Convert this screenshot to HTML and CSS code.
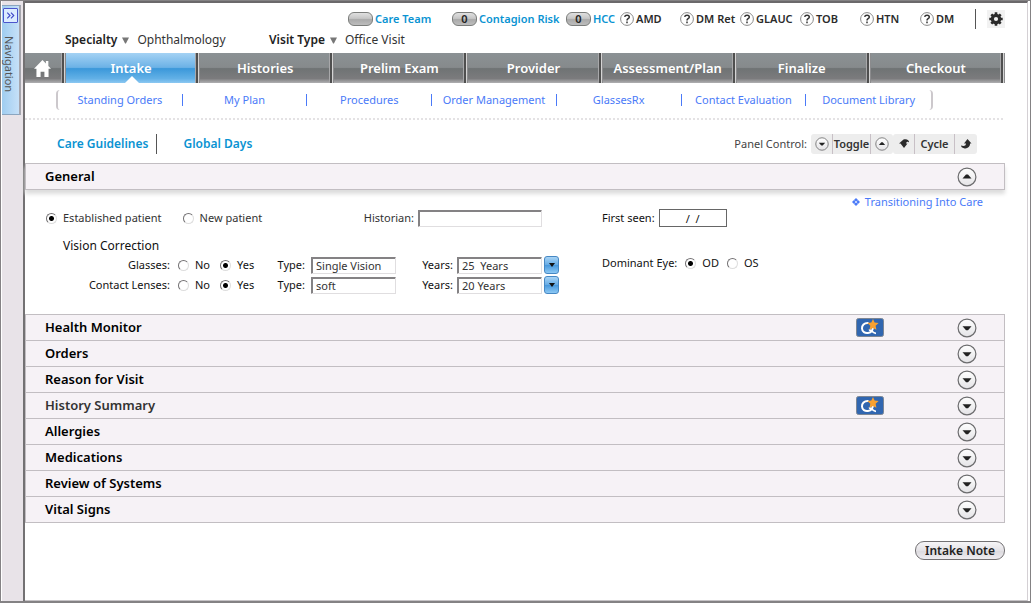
FILE: index.html
```html
<!DOCTYPE html>
<html lang="en">
<head>
<meta charset="utf-8">
<meta name="viewport" content="width=device-width, initial-scale=1">
<title>Intake</title>
<link rel="stylesheet" href="styles.css">
</head>
<body>
<svg class="defs" aria-hidden="true">
  <defs>
    <linearGradient id="disc" x1="0" y1="0" x2="0" y2="1">
      <stop offset="0" stop-color="#fff"/><stop offset="1" stop-color="#e4e3e6"/>
    </linearGradient>
    <symbol id="down" viewBox="0 0 20 20">
      <circle cx="10" cy="10" r="8.9" fill="url(#disc)" stroke="#6c6c6e" stroke-width="1.2"/>
      <path d="M5.500 8.200h9L11 12.200H9z" fill="#222"/>
    </symbol>
    <symbol id="up" viewBox="0 0 20 20">
      <circle cx="10" cy="10" r="8.900" fill="url(#disc)" stroke="#6c6c6e" stroke-width="1.200"/>
      <path d="M5.500 11.600h9L11 7.600H9z" fill="#222"/>
    </symbol>
    <symbol id="help" viewBox="0 0 14 14">
      <circle cx="7" cy="7" r="6.400" fill="#fff" stroke="#8a8a8a"/>
      <path d="M4.700 4.900C5 2.600 9.300 2.700 9.300 5 9.300 6.700 7 6.600 7 8.400M7 9.600v1.700" fill="none" stroke="#333" stroke-width="1.500"/>
    </symbol>
    <symbol id="quality" viewBox="0 0 28 19">
      <rect x=".5" y=".5" width="27" height="18" rx="2" fill="#3066b0" stroke="#7c8694"/>
      <path d="M12.500 5C8 4.600 5.800 7.500 6 10.500c.2 3.400 3 4.800 6 4.400 3.500-.5 5.300-3.200 4.700-5.900" fill="none" stroke="#fff" stroke-width="2"/>
      <path d="M13 12.500c2-1.500 3.500 2.800 7 2.800" fill="none" stroke="#fff" stroke-width="1.800"/>
      <path d="M17 1l1.600 3.600 4 .5-3 2.700.8 4L17 9.900l-3.500 1.900.8-4-3-2.700 4-.5z" fill="#f8a130"/>
    </symbol>
  </defs>
</svg>
<div class="window">
  <aside class="rail">
    <div class="rail-tab">
      <button class="expand" type="button" aria-label="Expand navigation">
        <svg viewBox="0 0 14 14"><path d="M3.500 4L6.500 7l-3 3M7.500 4l3 3-3 3" fill="none" stroke="#3f48c8" stroke-width="1.200"/></svg>
      </button>
      <span class="rail-label">Navigation</span>
    </div>
  </aside>
  <main class="main">
    <div class="alerts">
      <a class="alert blue" href="#"><span class="pill"></span>Care Team</a>
      <a class="alert blue" href="#"><span class="pill">0</span>Contagion Risk</a>
      <a class="alert blue" href="#"><span class="pill">0</span>HCC</a>
      <a class="alert" href="#"><svg class="help"><use href="#help"/></svg>AMD</a>
      <a class="alert" href="#"><svg class="help"><use href="#help"/></svg>DM Ret</a>
      <a class="alert" href="#"><svg class="help"><use href="#help"/></svg>GLAUC</a>
      <a class="alert" href="#"><svg class="help"><use href="#help"/></svg>TOB</a>
      <a class="alert" href="#"><svg class="help"><use href="#help"/></svg>HTN</a>
      <a class="alert last" href="#"><svg class="help"><use href="#help"/></svg>DM</a>
      <button class="gear" type="button" aria-label="Settings">
        <svg viewBox="0 0 18 18"><circle cx="9" cy="9" r="3.600" fill="none" stroke="#2b2b2b" stroke-width="3.200"/><path d="M9 2.300v13.400M2.300 9h13.400M4.300 4.300l9.400 9.400M13.700 4.300l-9.400 9.400" stroke="#2b2b2b" stroke-width="2.600"/><circle cx="9" cy="9" r="2.100" fill="#f2f2f2"/></svg>
      </button>
    </div>
    <div class="visit">
      <div class="visit-item specialty">
        <button type="button">Specialty <svg viewBox="0 0 8 8"><path d="M0 1h8L4.500 8h-1z" fill="#777"/></svg></button><span>Ophthalmology</span>
      </div>
      <div class="visit-item">
        <button type="button">Visit Type <svg viewBox="0 0 8 8"><path d="M0 1h8L4.500 8h-1z" fill="#777"/></svg></button><span>Office Visit</span>
      </div>
    </div>
    <nav class="tabs">
      <a class="home" href="#" aria-label="Home"><svg viewBox="0 0 16 16"><path d="M8 0L0 8.200h2.300V16h3.900v-5h3.600v5h3.900V8.200H16l-2.500-2.600V1h-2.300v2.300z" fill="#fff"/></svg></a>
      <a class="tab active" href="#">Intake</a>
      <a class="tab" href="#">Histories</a>
      <a class="tab" href="#">Prelim Exam</a>
      <a class="tab" href="#">Provider</a>
      <a class="tab" href="#">Assessment/Plan</a>
      <a class="tab" href="#">Finalize</a>
      <a class="tab" href="#">Checkout</a>
    </nav>
    <nav class="subnav">
      <a href="#">Standing Orders</a>
      <a href="#">My Plan</a>
      <a href="#">Procedures</a>
      <a href="#">Order Management</a>
      <a href="#">GlassesRx</a>
      <a href="#">Contact Evaluation</a>
      <a href="#">Document Library</a>
    </nav>
    <div class="dots"></div>
    <div class="tools">
      <a class="tool-link" href="#">Care Guidelines</a>
      <a class="tool-link" href="#">Global Days</a>
      <span class="panel-label">Panel Control:</span>
      <div class="control">
        <button class="icon-cell" type="button" aria-label="Expand all"><svg><use href="#down"/></svg></button>
        <button class="toggle" type="button">Toggle</button>
        <button class="icon-cell" type="button" aria-label="Collapse all"><svg><use href="#up"/></svg></button>
      </div>
      <div class="control">
        <button class="icon-cell" type="button" aria-label="Previous panel"><svg viewBox="0 0 14 14"><path d="M2 6.500L6.500 2.500c3-1 6 .5 5.500 3C11 4.500 9.500 4.500 9 6.500h1.500L7 11 3.500 6.500z" fill="#2b2b2b"/></svg></button>
        <button class="cycle" type="button">Cycle</button>
        <button class="icon-cell" type="button" aria-label="Next panel"><svg viewBox="0 0 14 14"><path d="M8.500 2L12.500 6.500H11c.3 3.500-3 5.500-6 4.700C3 11 2 9.500 2 8.500c2.500 1 5 .5 5-2H5z" fill="#2b2b2b"/></svg></button>
      </div>
    </div>

    <section class="general">
      <header class="bar open"><h2>General</h2><button class="arrow" type="button" aria-label="Collapse General"><svg><use href="#up"/></svg></button></header>
      <form class="form">
        <a class="transition" href="#"><svg viewBox="0 0 8 8"><path d="M4 0l2 2-2 1.500L2 2zM4 4.500L6 6 4 8 2 6zM2 2l1.500 2L2 6 0 4zM6 2l2 2-2 2-1.500-2z" fill="#4a7af8"/></svg>Transitioning Into Care</a>
        <div class="patient soft">
          <label class="radio"><input type="radio" name="patient" checked>Established patient</label>
          <label class="radio"><input type="radio" name="patient">New patient</label>
        </div>
        <div class="historian soft"><label for="historian">Historian:</label><input class="field" id="historian" type="text"></div>
        <div class="seen"><label for="seen">First seen:</label><input class="date" id="seen" type="text" value="/  /"></div>
        <h3>Vision Correction</h3>
        <span class="right">Glasses:</span>
        <div class="choice"><label class="radio"><input type="radio" name="glasses">No</label><label class="radio"><input type="radio" name="glasses" checked>Yes</label></div>
        <label class="right" for="gtype">Type:</label>
        <div class="type"><input class="field" id="gtype" type="text" value="Single Vision"></div>
        <label class="right" for="gyears">Years:</label>
        <div class="years"><input class="field" id="gyears" type="text" value="25  Years"><button class="drop" type="button" aria-label="Choose years"><svg viewBox="0 0 6 4"><path d="M0 0h6L3 4z" fill="#111"/></svg></button></div>
        <div class="eye"><span>Dominant Eye:</span><label class="radio"><input type="radio" name="eye" checked>OD</label><label class="radio"><input type="radio" name="eye">OS</label></div>
        <span class="right">Contact Lenses:</span>
        <div class="choice"><label class="radio"><input type="radio" name="contacts">No</label><label class="radio"><input type="radio" name="contacts" checked>Yes</label></div>
        <label class="right" for="ctype">Type:</label>
        <div class="type"><input class="field" id="ctype" type="text" value="soft"></div>
        <label class="right" for="cyears">Years:</label>
        <div class="years"><input class="field" id="cyears" type="text" value="20 Years"><button class="drop" type="button" aria-label="Choose years"><svg viewBox="0 0 6 4"><path d="M0 0h6L3 4z" fill="#111"/></svg></button></div>
      </form>
    </section>
    <section class="panels">
      <header class="bar"><h2>Health Monitor</h2><svg class="quality"><use href="#quality"/></svg><button class="arrow" type="button" aria-label="Expand Health Monitor"><svg><use href="#down"/></svg></button></header>
      <header class="bar"><h2>Orders</h2><button class="arrow" type="button" aria-label="Expand Orders"><svg><use href="#down"/></svg></button></header>
      <header class="bar"><h2>Reason for Visit</h2><button class="arrow" type="button" aria-label="Expand Reason for Visit"><svg><use href="#down"/></svg></button></header>
      <header class="bar muted"><h2>History Summary</h2><svg class="quality"><use href="#quality"/></svg><button class="arrow" type="button" aria-label="Expand History Summary"><svg><use href="#down"/></svg></button></header>
      <header class="bar"><h2>Allergies</h2><button class="arrow" type="button" aria-label="Expand Allergies"><svg><use href="#down"/></svg></button></header>
      <header class="bar"><h2>Medications</h2><button class="arrow" type="button" aria-label="Expand Medications"><svg><use href="#down"/></svg></button></header>
      <header class="bar"><h2>Review of Systems</h2><button class="arrow" type="button" aria-label="Expand Review of Systems"><svg><use href="#down"/></svg></button></header>
      <header class="bar"><h2>Vital Signs</h2><button class="arrow" type="button" aria-label="Expand Vital Signs"><svg><use href="#down"/></svg></button></header>
    </section>
    <button class="note" type="button">Intake Note</button>
  </main>
</div>
</body>
</html>
```
FILE: styles.css
```css
* { box-sizing: border-box; }
body { margin: 0; font: 11px/16px "Noto Sans", "Open Sans", sans-serif; color: #000; background: #fff; }
button, input { font: inherit; color: inherit; margin: 0; padding: 0; }
button { border: 0; background: none; cursor: pointer; }
a { color: inherit; text-decoration: none; }
h2, h3 { margin: 0; }
svg { display: block; flex: none; }
.defs { position: absolute; width: 0; height: 0; }

.window { display: flex; min-height: 100vh; border: 1px solid #848284; border-width: 1px 1px 2px; }
.rail { width: 24px; flex: none; background: #e8e3e8; border-left: 1px solid #fff; border-right: 2px solid #737173; padding-top: 4px; }
.rail-tab { width: 19px; height: 110px; display: flex; flex-direction: column; align-items: center; border: 1px solid #8ba6c0; border-left: 0; border-right: 2px solid #a5a5ad; background: linear-gradient(90deg, #9fcdf0, #c6e0f8); }
.expand { width: 15px; height: 15px; margin-top: 2px; border: 1px solid #4b55cc; border-radius: 1px; background: #dcecff; }
.expand svg { width: 13px; height: 13px; }
.rail-label { writing-mode: vertical-rl; margin-top: 13px; padding-right: 4px; font-size: 11px; line-height: 12px; color: #555; }

.main { flex: 1; display: flex; flex-direction: column; padding-right: 22px; border-top: 2px solid #6b696b; border-right: 1px solid #d4d0d4; margin-right: 2px; border-bottom: 1px solid #c6c3c6; }
.alerts { display: flex; justify-content: flex-end; align-items: center; margin-top: 6px; height: 20px; font-weight: 600; color: #2b2b2b; }
.alert { display: flex; align-items: center; gap: 2px; width: 60px; white-space: nowrap; }
.alert.blue { color: #0a93d2; }
.alert:nth-child(1) { width: 104px; }
.alert:nth-child(2) { width: 114px; }
.alert:nth-child(3) { width: 54px; }
.alert.last { width: 56px; height: 20px; border-right: 1px solid #555; }
.pill { width: 25px; height: 14px; border: 1px solid #7b7d7b; border-radius: 6px; background: linear-gradient(#e0e0e0 0, #c6c6c6 45%, #aaa 55%, #bdbdbd); color: #222; text-align: center; line-height: 12px; }
.help { width: 14px; height: 14px; }
.gear { width: 18px; height: 18px; margin-left: 11px; background: #f2f2f2; }
.visit { display: flex; align-items: center; height: 22px; margin-bottom: 2px; padding-left: 40px; font-size: 12px; color: #333; }
.visit-item { display: flex; align-items: center; gap: 8px; }
.specialty { width: 204px; }
.visit-item button { display: flex; align-items: center; gap: 5px; font-weight: 600; color: #222; }
.visit-item svg { width: 7px; height: 8px; }

.tabs { display: flex; height: 30px; background: linear-gradient(#8b9194 0, #868a8c 48%, #6f7374 52%, #7b7b7d 85%, #b0b0b2 100%); font-size: 13px; font-weight: 600; color: #fff; }
.home { width: 41px; display: flex; align-items: center; justify-content: center; padding-right: 5px; }
.home svg { width: 17px; height: 17px; }
.home, .tab { border-right: 1px solid #8b8b8d; box-shadow: inset -1px 0 #d4d4d4, inset -3px 0 #4f4f4f, inset -4px 0 #a8a8aa; }
.tab { flex: 1; display: flex; align-items: center; justify-content: center; padding-right: 3px; }
.active { background: linear-gradient(#a4d2f4 0, #6cb2e6 48%, #3b98da 52%, #62b0e6 85%, #8cc8f2 100%); position: relative; }
.active::after { content: ""; position: absolute; left: 50%; bottom: 0; margin-left: -8px; border: 7px solid transparent; border-top: 0; border-bottom-color: #fff; }

.subnav { display: grid; grid-template-columns: repeat(7, 1fr); margin: 7px 72px 0 31px; height: 20px; align-items: center; border: 2px solid #ccc8cc; border-width: 0 2px; border-radius: 4px; color: #4a7af8; text-align: center; }
.subnav a { line-height: 12px; border-right: 1px solid #4a7af8; white-space: nowrap; }
.subnav a:last-child { border: 0; }
.dots { height: 2px; margin-top: 8px; background: repeating-linear-gradient(90deg, #e4e2e4 0, #e4e2e4 2px, transparent 2px, transparent 4px); }

.tools { display: flex; align-items: center; height: 21px; margin: 13px 28px 9px 32px; font-size: 12px; }
.tool-link { color: #0a93d2; font-weight: 600; line-height: 20px; }
.tool-link:first-child { padding-right: 8px; margin-right: 26px; border-right: 1px solid #555; }
.panel-label { margin-left: auto; margin-right: 4px; font-size: 11px; color: #444; }
.control { display: flex; height: 20px; background: #ededed; border-radius: 3px; font-size: 11px; font-weight: 600; color: #333; }
.control button { border-right: 1px solid #c8c0c6; }
.control button:last-child { border: 0; }
.icon-cell { width: 22px; display: flex; align-items: center; justify-content: center; }
.icon-cell svg { width: 14px; height: 14px; }
.control .toggle { width: 38px; }
.control .cycle { width: 40px; }

.bar { display: flex; align-items: center; height: 26px; padding: 0 27px 0 19px; border: 1px solid #c2bec2; border-bottom: 0; background: #f6f2f6; }
.bar h2 { font-size: 13px; font-weight: 600; line-height: 20px; padding-bottom: 2px; flex: 1; }
.muted h2 { color: #333; }
.open { height: 27px; border-bottom: 1px solid #c2bec2; box-shadow: 0 4px 4px #ddd; }
.arrow, .arrow svg { width: 20px; height: 20px; }
.quality { width: 28px; height: 19px; margin-right: 73px; }
.panels { border-bottom: 1px solid #c2bec2; }

.form { display: grid; grid-template-columns: 145px 101px 34px 96px 52px 149px 1fr; grid-template-rows: 12px 20px 27px 20px 20px; align-items: center; padding: 6px 0 19px; color: #111; }
.transition { grid-column: 1 / -1; justify-self: end; display: flex; align-items: center; gap: 5px; margin-right: 22px; color: #4a7af8; }
.transition svg { width: 8px; height: 8px; }
.soft { color: #333; }
.patient { grid-column: 1 / 3; display: flex; gap: 21px; padding-left: 21px; }
.historian { grid-column: 3 / 7; display: flex; align-items: center; justify-content: flex-end; gap: 4px; margin-right: 60px; }
.historian .field { width: 124px; }
.seen, .eye { display: flex; align-items: center; gap: 4px; }
.eye { gap: 8px; padding-bottom: 4px; }
.date { width: 68px; height: 18px; border: 1px solid #666; background: #fff; text-align: center; }
.form h3 { grid-column: 1 / -1; padding: 8px 0 0 38px; font-size: 12px; font-weight: normal; }
.right { text-align: right; white-space: nowrap; }
.radio { display: flex; align-items: center; gap: 6px; white-space: nowrap; }
.radio input { appearance: none; width: 11px; height: 11px; flex: none; border: 1px solid; border-color: #737173 #ddd #ddd #737173; border-radius: 50%; background: #fff; }
.radio input:checked { background: radial-gradient(circle, #000 2px, #fff 3px); }
.choice { display: flex; gap: 10px; padding-left: 8px; }
.type { padding-left: 6px; }
.years { display: flex; align-items: center; gap: 2px; padding-left: 4px; }
.field { display: block; width: 85px; height: 17px; padding: 0 4px; border: 1px solid; border-color: #848284 #e0dee0 #e0dee0 #848284; box-shadow: inset 1px 1px #848284; background: #fff; color: #333; }
.drop { width: 15px; height: 18px; display: flex; align-items: center; justify-content: center; border: 1px solid #4688c4; border-radius: 3px; background: linear-gradient(#a8d4f6, #64aae4 50%, #4898dc 52%, #8cc8f4); }
.drop svg { width: 6px; height: 4px; }

.note { align-self: flex-end; width: 90px; height: 19px; margin: 18px 0; border: 1px solid #737173; border-radius: 9px; background: linear-gradient(#f6f5f7, #e4e2e6 50%, #dcdade 52%, #eeecf0); font-size: 12px; line-height: 16px; font-weight: 600; color: #222; }
```
